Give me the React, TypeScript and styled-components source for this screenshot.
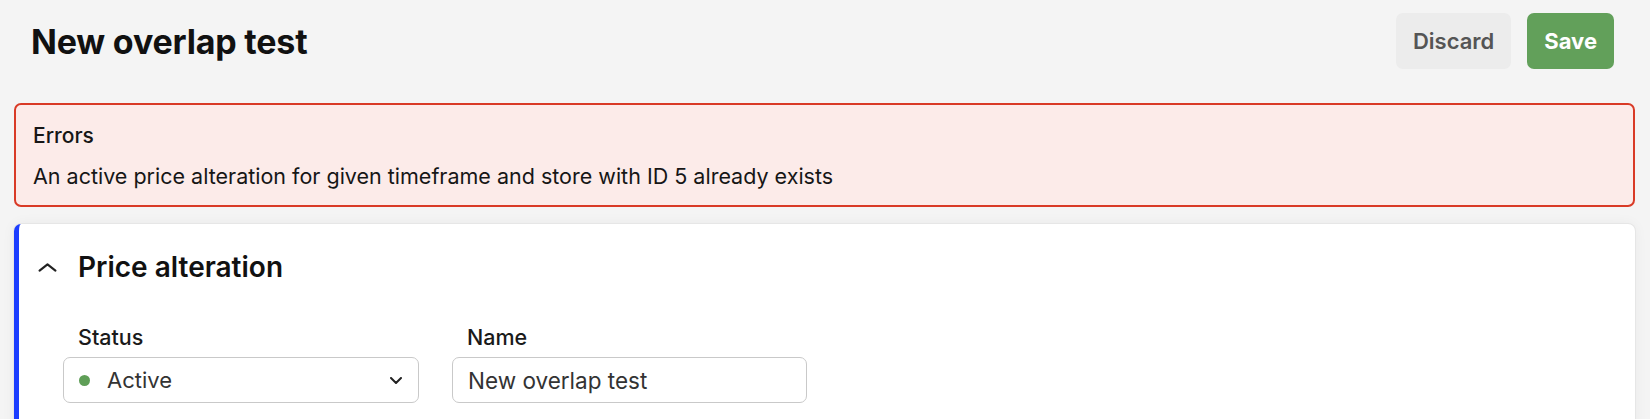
import styled, { createGlobalStyle } from "styled-components";

const GlobalStyle = createGlobalStyle`
  html, body {
    margin: 0;
    padding: 0;
    background: #f4f4f4;
    font-family: Inter, "Noto Sans", sans-serif;
  }
`;

export default function App() {
  return (
    <>
      <GlobalStyle />
      <Page>
        <Header>
          <Title>New overlap test</Title>
          <Actions>
            <Button>Discard</Button>
            <Button $primary>Save</Button>
          </Actions>
        </Header>

        <ErrorBox>
          <div className="heading">Errors</div>
          <div className="message">
            An active price alteration for given timeframe and store with ID 5
            already exists
          </div>
        </ErrorBox>

        <Card>
          <CardHeader>
            <Chevron viewBox="0 0 18 8" aria-hidden>
              <path d="M1.5 7 L9 1 L16.5 7" />
            </Chevron>
            <h2>Price alteration</h2>
          </CardHeader>
          <FieldRow>
            <Field>
              <Label>Status</Label>
              <SelectBox>
                <Dot />
                <span className="value">Active</span>
                <svg viewBox="0 0 12 7" aria-hidden>
                  <path d="M1 1 L6 6 L11 1" />
                </svg>
              </SelectBox>
            </Field>
            <Field>
              <Label>Name</Label>
              <TextInput defaultValue="New overlap test" />
            </Field>
          </FieldRow>
        </Card>
      </Page>
    </>
  );
}

const Page = styled.div`
  display: flex;
  flex-direction: column;
  padding: 0 15px 0 14px;
  height: 419px;
  overflow: hidden;
  box-sizing: border-box;
`;

const Header = styled.div`
  display: flex;
  align-items: center;
  justify-content: space-between;
  padding: 13px 21px 34px 17px;
`;

const Title = styled.h1`
  margin: 0;
  font-size: 34px;
  font-weight: 700;
  color: #111111;
  letter-spacing: -0.2px;
`;

const Actions = styled.div`
  display: flex;
  gap: 16px;
`;

const Button = styled.button<{ $primary?: boolean }>`
  height: 56px;
  padding: 0 17px;
  border: none;
  border-radius: 7px;
  font-family: Inter, sans-serif;
  font-size: 22px;
  font-weight: ${(p) => (p.$primary ? 700 : 600)};
  color: ${(p) => (p.$primary ? "#ffffff" : "#555555")};
  background: ${(p) => (p.$primary ? "#62a05a" : "#ececec")};
`;

const ErrorBox = styled.div`
  display: flex;
  flex-direction: column;
  gap: 14px;
  padding: 18px 17px 16px;
  border: 2px solid #d93a26;
  border-radius: 7px;
  background: #fcebe9;
  color: #161616;

  .heading {
    font-size: 21px;
    font-weight: 500;
    line-height: 26px;
  }

  .message {
    font-size: 21.5px;
    line-height: 26px;
  }
`;

const Card = styled.div`
  margin-top: 17px;
  background: #ffffff;
  border-radius: 7px;
  border-left: 5px solid #1b3dff;
  box-shadow: 0 0 0 1px #e6e6e6, 0 0 14px rgba(0, 0, 0, 0.05);
  padding: 0 0 40px 44px;
`;

const CardHeader = styled.div`
  display: flex;
  align-items: center;
  gap: 21px;
  height: 86px;
  margin-left: -25px;

  h2 {
    margin: 0;
    font-size: 28px;
    font-weight: 600;
    color: #111111;
  }
`;

const Chevron = styled.svg`
  width: 19px;
  height: 9px;
  fill: none;
  stroke: #222222;
  stroke-width: 2;
  stroke-linecap: round;
  stroke-linejoin: round;
`;

const FieldRow = styled.div`
  display: flex;
  gap: 33px;
  margin-top: 14px;
`;

const Field = styled.div`
  display: flex;
  flex-direction: column;
  gap: 7px;
`;

const Label = styled.label`
  padding-left: 15px;
  font-size: 21.5px;
  font-weight: 500;
  line-height: 26px;
  color: #1a1a1a;
`;

const SelectBox = styled.div`
  display: flex;
  align-items: center;
  box-sizing: border-box;
  width: 356px;
  height: 46px;
  padding: 0 16px 0 15px;
  border: 1.5px solid #c9c9c9;
  border-radius: 7px;
  background: #ffffff;

  .value {
    flex: 1;
    margin-left: 17px;
    font-size: 22px;
    color: #333333;
  }

  svg {
    width: 12px;
    height: 7px;
    fill: none;
    stroke: #222222;
    stroke-width: 2;
    stroke-linecap: round;
    stroke-linejoin: round;
  }
`;

const Dot = styled.span`
  width: 11px;
  height: 11px;
  border-radius: 50%;
  background: #5f9e57;
`;

const TextInput = styled.input`
  box-sizing: border-box;
  width: 355px;
  height: 46px;
  padding: 0 15px;
  border: 1.5px solid #c9c9c9;
  border-radius: 7px;
  background: #ffffff;
  font-family: Inter, sans-serif;
  font-size: 22.5px;
  color: #333333;
  outline: none;
`;
